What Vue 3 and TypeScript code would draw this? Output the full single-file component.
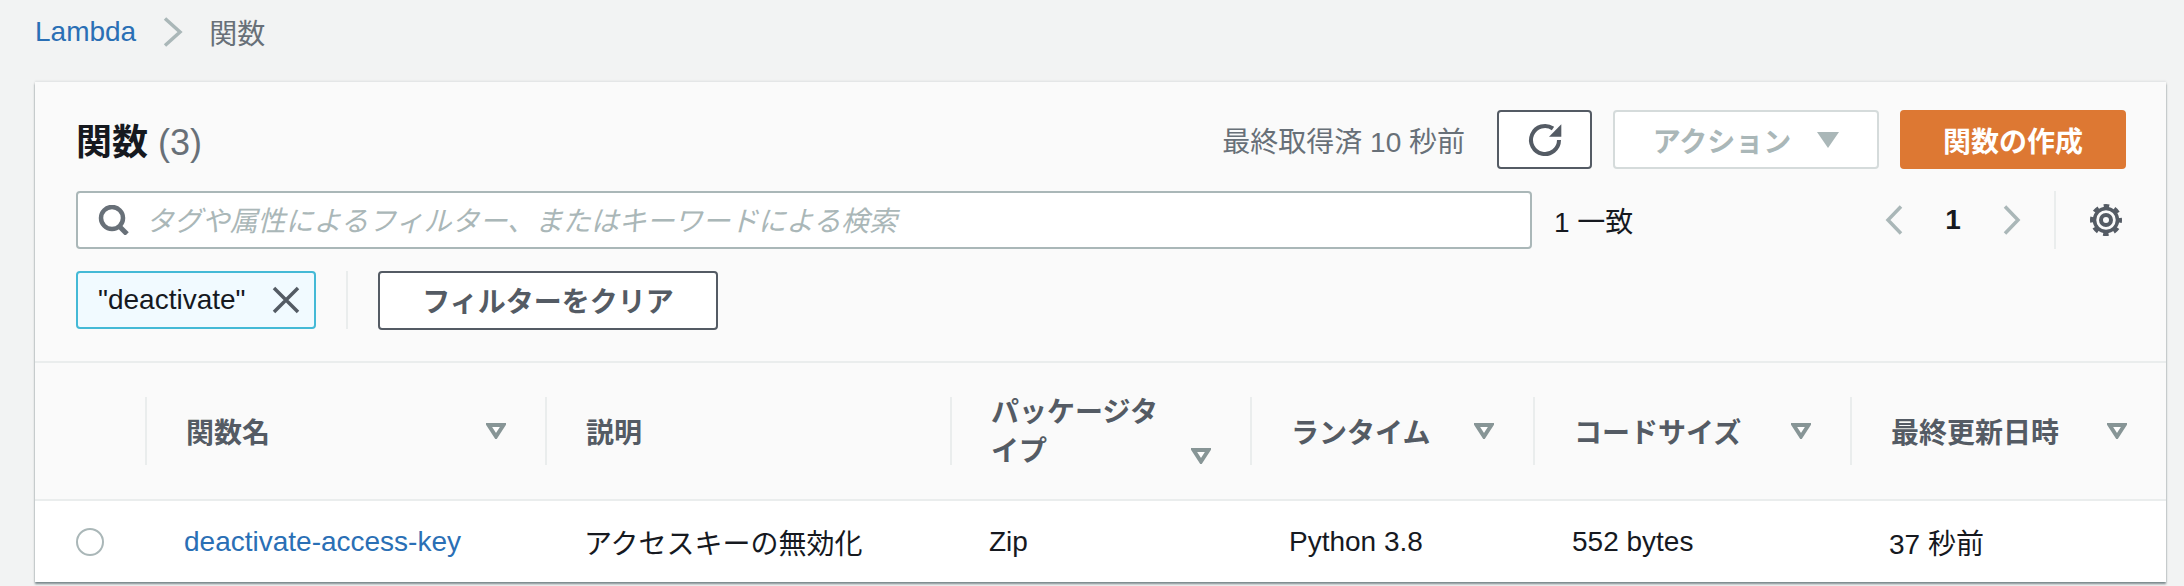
<script setup lang="ts">
const columns = [
  { label: '関数名', sortable: true },
  { label: '説明', sortable: false },
  { label: 'パッケージタイプ', sortable: true, wrap: true },
  { label: 'ランタイム', sortable: true },
  { label: 'コードサイズ', sortable: true },
  { label: '最終更新日時', sortable: true },
]

const row = {
  name: 'deactivate-access-key',
  description: 'アクセスキーの無効化',
  type: 'Zip',
  runtime: 'Python 3.8',
  size: '552 bytes',
  updated: '37 秒前',
}
</script>

<template>
  <div class="page">
    <nav class="crumbs">
      <a class="crumb-link">Lambda</a>
      <svg class="crumb-sep" width="20" height="30" viewBox="0 0 20 30">
        <path d="M2 1.5 L17 15 L2 28.5" fill="none" stroke="#aab7b8" stroke-width="3.5" />
      </svg>
      <span class="crumb-current">関数</span>
    </nav>

    <section class="card">
      <div class="top">
        <div class="title-row">
          <h1 class="title">関数 <span class="count">(3)</span></h1>
          <span class="fetched">最終取得済 10 秒前</span>
          <button class="btn refresh">
            <svg width="36" height="36" viewBox="0 0 36 36">
              <path d="M32 18 A14 14 0 1 1 26 6.5" fill="none" stroke="#545b64" stroke-width="4" />
              <path d="M34.3 2.3 V14.7 H22 Z" fill="#545b64" />
            </svg>
          </button>
          <button class="btn action">
            アクション
            <svg width="22" height="16" viewBox="0 0 22 16"><path d="M0 0 H22 L11 16 Z" fill="#aab7b8" /></svg>
          </button>
          <button class="btn create">関数の作成</button>
        </div>

        <div class="search-row">
          <div class="search">
            <svg class="search-icon" width="32" height="30" viewBox="0 0 32 30">
              <circle cx="14" cy="13" r="11" fill="none" stroke="#687078" stroke-width="4.5" />
              <path d="M21 21 L29 29" stroke="#687078" stroke-width="5" />
            </svg>
            <span class="placeholder">タグや属性によるフィルター、またはキーワードによる検索</span>
          </div>
          <span class="matches">1 一致</span>
          <div class="pager">
            <svg width="18" height="30" viewBox="0 0 18 30"><path d="M16 1.5 L3 15 L16 28.5" fill="none" stroke="#aab7b8" stroke-width="3.5" /></svg>
            <span class="page-num">1</span>
            <svg width="18" height="30" viewBox="0 0 18 30"><path d="M2 1.5 L15 15 L2 28.5" fill="none" stroke="#aab7b8" stroke-width="3.5" /></svg>
          </div>
          <div class="settings">
            <svg width="32" height="32" viewBox="0 0 32 32" fill="none" stroke="#545b64">
              <circle cx="16" cy="16" r="5" stroke-width="4" />
              <circle cx="16" cy="16" r="11.5" stroke-width="3.5" />
              <circle cx="16" cy="16" r="14" stroke-width="4" stroke-dasharray="5.5 5.5" stroke-dashoffset="2.75" />
            </svg>
          </div>
        </div>

        <div class="token-row">
          <div class="token">
            <span>"deactivate"</span>
            <svg width="28" height="28" viewBox="0 0 28 28"><path d="M2 2 L26 26 M26 2 L2 26" stroke="#545b64" stroke-width="3.5" /></svg>
          </div>
          <span class="token-sep"></span>
          <button class="btn clear">フィルターをクリア</button>
        </div>
      </div>

      <div class="grid head">
        <div class="th-select"></div>
        <div v-for="col in columns" :key="col.label" class="th" :class="{ wrap: col.wrap }">
          <span class="th-label">{{ col.label }}</span>
          <svg v-if="col.sortable" class="sort" width="20" height="16" viewBox="0 0 20 16">
            <path d="M2.5 2 H17.5 L10 13.5 Z" fill="#fff" stroke="#879596" stroke-width="4" stroke-linejoin="miter" />
          </svg>
        </div>
      </div>

      <div class="grid body">
        <div class="td-select"><span class="radio"></span></div>
        <div class="td"><a class="fn-link">{{ row.name }}</a></div>
        <div class="td">{{ row.description }}</div>
        <div class="td">{{ row.type }}</div>
        <div class="td">{{ row.runtime }}</div>
        <div class="td">{{ row.size }}</div>
        <div class="td">{{ row.updated }}</div>
      </div>
    </section>
  </div>
</template>

<style>
html, body {
  background: #f2f3f3;
}
</style>

<style scoped>
.page {
  width: 2184px;
  height: 586px;
  box-sizing: border-box;
  padding: 0 18px 0 35px;
  overflow: hidden;
  font-family: "Liberation Sans", "Noto Sans CJK JP", sans-serif;
  font-size: 28px;
  color: #16191f;
}

.crumbs {
  display: flex;
  align-items: center;
  height: 64px;
  margin-bottom: 18px;
}

.crumb-link {
  color: #2a6fb5;
}

.crumb-sep {
  margin: 0 26px 0 27px;
}

.crumb-current {
  color: #687078;
}

.card {
  background: #fafafa;
  box-shadow: 0 2px 2px rgba(0, 28, 36, 0.5), 0 -1px 2px rgba(0, 28, 36, 0.08);
}

.top {
  display: flex;
  flex-direction: column;
  gap: 22px;
  padding: 28px 40px 32px 41px;
  border-bottom: 2px solid #eaeded;
}

.title-row {
  display: flex;
  align-items: center;
  height: 59px;
}

.title {
  margin: 0 auto 2px 0;
  font-size: 36px;
  font-weight: 700;
}

.count {
  font-weight: 400;
  color: #687078;
}

.fetched {
  color: #687078;
  margin-right: 32px;
}

.btn {
  box-sizing: border-box;
  height: 59px;
  border-radius: 4px;
  border: 2px solid #545b64;
  background: #fff;
  font: inherit;
  font-weight: 700;
  color: #545b64;
  display: flex;
  align-items: center;
  justify-content: center;
}

.refresh {
  width: 95px;
  margin-right: 21px;
}

.action {
  width: 266px;
  margin-right: 21px;
  padding-left: 6px;
  gap: 26px;
  color: #aab7b8;
  border-color: #d5dbdb;
}

.create {
  width: 226px;
  background: #dd7833;
  border-color: #dd7833;
  color: #fff;
}

.search-row {
  display: flex;
  align-items: center;
  height: 58px;
}

.search {
  box-sizing: border-box;
  width: 1456px;
  height: 58px;
  display: flex;
  align-items: center;
  gap: 16px;
  padding-left: 20px;
  background: #fff;
  border: 2px solid #aab7b8;
  border-radius: 4px;
}

.search-icon {
  flex: none;
}

.placeholder {
  font-style: italic;
  color: #aab7b8;
  margin-bottom: 3px;
  letter-spacing: -0.1px;
}

.matches {
  margin-left: 22px;
}

.pager {
  display: flex;
  align-items: center;
  margin-left: auto;
}

.page-num {
  width: 100px;
  text-align: center;
  font-weight: 700;
}

.settings {
  display: flex;
  align-items: center;
  height: 58px;
  margin-left: 33px;
  padding: 0 4px 0 34px;
  border-left: 2px solid #eaeded;
}

.token-row {
  display: flex;
  align-items: center;
  height: 58px;
}

.token {
  box-sizing: border-box;
  width: 240px;
  height: 58px;
  display: flex;
  align-items: center;
  justify-content: space-between;
  padding: 0 14px 0 20px;
  background: #f1faff;
  border: 2px solid #44b9d6;
  border-radius: 4px;
}

.token-sep {
  width: 2px;
  height: 58px;
  margin: 0 30px;
  background: #eaeded;
}

.clear {
  width: 340px;
}

.grid {
  display: grid;
  grid-template-columns: 110px 400px 405px 300px 283px 317px 316px;
}

.head {
  height: 136px;
  align-items: center;
  border-bottom: 2px solid #eaeded;
}

.th-select {
  height: 68px;
}

.th {
  box-sizing: border-box;
  height: 68px;
  display: flex;
  align-items: center;
  justify-content: space-between;
  padding: 0 39px 0 39px;
  border-left: 2px solid #eaeded;
  font-weight: 700;
  color: #545b64;
}

.th-label {
  margin-right: 10px;
}

.th.wrap {
  align-items: flex-end;
}

.th.wrap .th-label {
  width: 170px;
  flex: none;
  line-height: 39px;
  margin-bottom: -6px;
}

.sort {
  flex: none;
}

.th.wrap .sort {
  margin-bottom: 1px;
}

.body {
  height: 81px;
  align-items: center;
  background: #fff;
}

.td-select {
  display: flex;
  justify-content: center;
}

.radio {
  box-sizing: border-box;
  width: 28px;
  height: 28px;
  border: 2px solid #aab7b8;
  border-radius: 50%;
  background: #fff;
}

.td {
  padding-left: 39px;
}

.fn-link {
  color: #2a6fb5;
}
</style>
